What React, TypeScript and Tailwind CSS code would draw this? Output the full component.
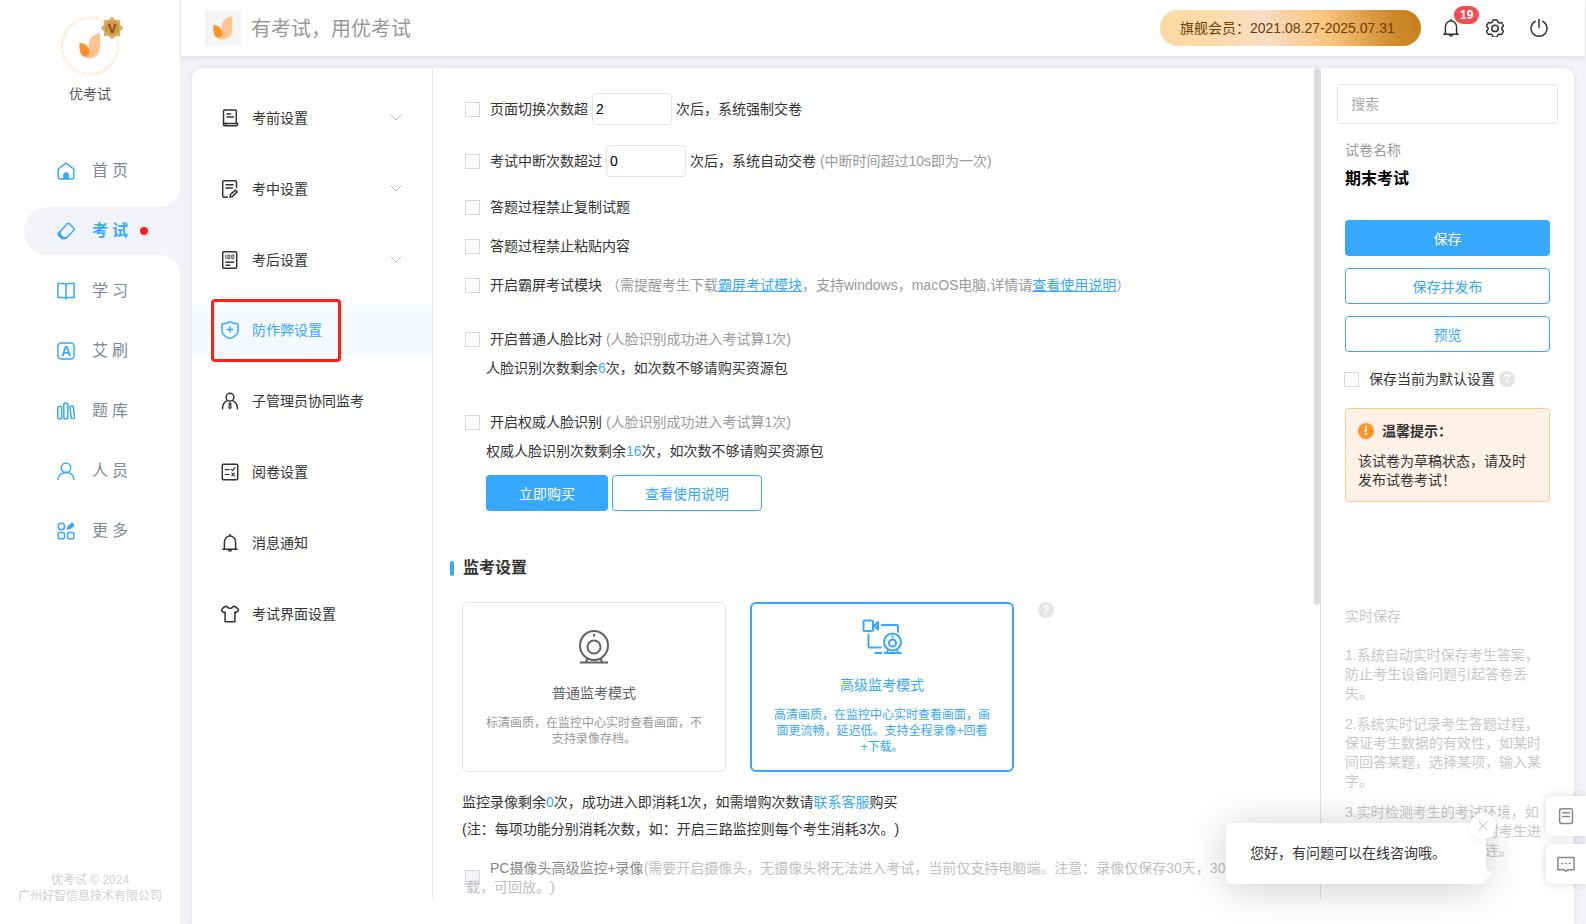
import React from "react";

type IconProps = { name: string; className?: string };

// line icons, all on an 18x18 grid
const icons: Record<string, React.ReactNode> = {
  home: (
    <>
      <path d="M1.200 7 9 1.200 16.800 7v8a2 2 0 0 1-2 2H3.200a2 2 0 0 1-2-2z"/>
      <path d="M6.200 17v-4a2.800 2.800 0 0 1 5.600 0v4z" fill="currentColor" stroke="none"/>
    </>
  ),
  exam: (
    <>
      <path d="M10.200 1.900a1.800 1.800 0 0 1 2.500 0l3.900 4a1.800 1.800 0 0 1 0 2.500l-7.700 8H4.600L1.800 13.500a1.800 1.800 0 0 1 0-2.800z"/>
      <path d="M1.600 10.600 1.800 13.500l2.800 2.900h4.300l1.100-1.100c-3 .4-6.500-1.500-6.500-6.100z" fill="currentColor" stroke="none"/>
    </>
  ),
  study: <path d="M9 3.200C8.600 2 7.800 1.500 6.600 1.500H.9v14h6.500c.9 0 1.600.4 1.600 1.500m0-13.800c.4-1.200 1.200-1.700 2.400-1.700h5.700v14h-6.500c-.9 0-1.600.4-1.600 1.500zM9 3.200v13.300"/>,
  brush: (
    <>
      <rect x=".9" y=".9" width="16.200" height="16.200" rx="3.500"/>
      <text x="9" y="13.900" textAnchor="middle" fontSize="14" fontWeight="700" fill="currentColor" stroke="none">A</text>
    </>
  ),
  bank: (
    <>
      <rect x=".8" y="4.500" width="3.800" height="12.300" rx=".8"/>
      <rect x="6.800" y="1.200" width="4" height="15.600" rx=".8"/>
      <rect x="13.500" y="4" width="3.500" height="12.500" rx=".8" transform="rotate(-7 15 10)"/>
    </>
  ),
  people: (
    <>
      <circle cx="9" cy="5.800" r="4.700"/>
      <path d="M1.100 17.300c.4-4 3.500-6.900 7.900-6.900s7.500 2.900 7.900 6.900"/>
    </>
  ),
  more: (
    <>
      <circle cx="4.300" cy="4.500" r="3.200"/>
      <rect x="1.200" y="10.600" width="6.200" height="6.200" rx="1.200"/>
      <rect x="10.600" y="10.600" width="6.200" height="6.200" rx="1.200"/>
      <path d="m9.700 7.900 1-3.800 3.600-3a1.300 1.300 0 0 1 1.700.1l1 1a1.300 1.300 0 0 1 0 1.700l-3.500 3.200-3.800.8z" fill="currentColor" stroke="none"/>
    </>
  ),
  before: (
    <>
      <path d="M2.500 14.500V2.200A1.200 1.200 0 0 1 3.700 1h10.400a1.200 1.200 0 0 1 1.200 1.200v12.300"/>
      <path d="M6 5h3.500M6 8h6.500M3.800 14.500h12.900c0 1.500-.6 2.200-1.700 2.200H3.900c-1 0-1.500-.6-1.500-1.300s.6-1.200 1.400-1.200c.9 0 1.300.6 1.300 1.300"/>
    </>
  ),
  during: (
    <>
      <path d="M15.500 7.500V2A1.200 1.200 0 0 0 14.300.800H2.900A1.200 1.200 0 0 0 1.700 2v14a1.200 1.200 0 0 0 1.200 1.200h3.600M5 4.800h7M5 8h6.500"/>
      <path d="m9 17 .5-2.600 5-4.300 1.700 1.800-4.700 4.500z"/>
    </>
  ),
  after: (
    <>
      <rect x="1.700" y=".8" width="14" height="16.400" rx="1.200"/>
      <path d="M4.900 4v3.700M7.300 4h1.500v3.700H7.300zM11.200 4h1.500v3.700h-1.500z" strokeWidth=".9"/>
      <path d="M5 11.300h7.500M5 14.200h3.500"/>
    </>
  ),
  shield: (
    <>
      <path d="M9 .7c2.300 1.500 4.900 2.100 8 2.200v6.600c0 3.900-3.800 6.600-8 8-4.200-1.400-8-4.100-8-8V2.900C4.100 2.800 6.700 2.200 9 .7z"/>
      <path d="M9 5.700v5.400M6.300 8.400h5.400" strokeWidth="1.500"/>
    </>
  ),
  admin: (
    <>
      <circle cx="9" cy="5.200" r="3.900"/>
      <path d="M1.500 16.800c0-4.200 1.900-6.800 4.600-7.900M16.500 16.800c0-4.200-1.900-6.800-4.600-7.900"/>
      <path d="m9 10.800 1 .9-.5 1.200.7 2.400L9 16.700l-1.200-1.400.7-2.400-.5-1.200z" strokeWidth="1.200"/>
    </>
  ),
  marking: (
    <>
      <rect x="1.300" y="1.300" width="15.400" height="15.400" rx="1"/>
      <path d="M4.300 6.700h4M4.300 11.500h4M10.500 6.500l1.100 1.100 2.200-2.800M10.800 10.200l2.600 2.600m0-2.600-2.600 2.600" strokeWidth="1.200"/>
    </>
  ),
  bell: (
    <>
      <path d="M9 .5v1.500M3.400 14.300V7.900C3.400 4.600 5.900 2 9 2s5.600 2.600 5.600 5.900v6.400l1.500 1H1.900z"/>
      <path d="M7.300 15.600c.2 1 .8 1.500 1.700 1.500s1.500-.5 1.700-1.500"/>
    </>
  ),
  shirt: <path d="M5.600 1.200c.8 1.600 2 2.200 3.400 2.200s2.600-.6 3.400-2.200c2.400.3 4.300 2 5.200 4.300l-2.700 2.200-1-.7v9.700H4.100V7l-1 .7L.4 5.500C1.300 3.200 3.200 1.500 5.600 1.200z"/>,
  gear: (
    <>
      <path d="M7 .9h4l.9 2.300 1.200.7 2.500-.4 1.900 3.400-1.600 1.900v1.400l1.600 1.900-1.900 3.400-2.500-.4-1.200.7-.9 2.300H7l-.9-2.300-1.200-.7-2.500.4L.5 12.100l1.600-1.900V8.800L.5 6.900l1.900-3.400 2.500.4 1.200-.7z"/>
      <circle cx="9" cy="9.400" r="3.200"/>
    </>
  ),
  power: <path d="M9 .5v8M5.200 2.300a8 8 0 1 0 7.600 0"/>,
  note: (
    <>
      <rect x="2.600" y="1.800" width="12.800" height="14.700" rx="2.200"/>
      <path d="M5.600 5.700h6.800M5.600 9.500h6.800"/>
    </>
  ),
  chat: (
    <>
      <path d="M.9 2.500h16.200v12.200h-6.300L9 16.400l-1.800-1.700H.9z"/>
      <path d="M5 8.600h.8M8.600 8.600h.8M12.200 8.600h.8"/>
    </>
  ),
};

function Icon({name, className = ""}: IconProps) {
  return (
    <svg viewBox="0 0 18 18" fill="none" stroke="currentColor" strokeWidth="1.5" strokeLinejoin="round" strokeLinecap="round" className={`size-[18px] shrink-0 ${className}`} aria-hidden="true">
      {icons[name]}
    </svg>
  );
}

function Logo({className}: { className: string }) {
  return (
    <svg viewBox="0 0 20 24" className={className} aria-hidden="true">
      <path d="M19.300.2C11.500 1.200 8.300 6.500 9 12c.8 4 .3 8-4.500 10.200 2.700 2 8.800 1.800 12-1.700 2.900-3.300 2.800-6.500 2.800-11.500z" fill="#ffc490"/>
      <path d="M.3 9c4.200.2 8 2.800 9.100 6.500.8 3.200-.9 6.300-4.400 6.500C1.300 21 0 17.500.3 9z" fill="#ff9328"/>
    </svg>
  );
}

function Check({id, disabled}: { id: string; disabled?: boolean }) {
  return <input id={id} type="checkbox" disabled={disabled} className="size-[15px] shrink-0 appearance-none border border-[#d3d6df] bg-white checked:bg-[#36a9ff] disabled:bg-[#f2f4f8]"/>;
}

function Help() {
  return <span className="flex size-4 shrink-0 items-center justify-center rounded-full bg-[#e4e4e4] text-xs font-bold leading-4 text-white">?</span>;
}

const nav = [
  {icon: "home", label: "首页"},
  {icon: "exam", label: "考试", active: true},
  {icon: "study", label: "学习"},
  {icon: "brush", label: "艾刷"},
  {icon: "bank", label: "题库"},
  {icon: "people", label: "人员"},
  {icon: "more", label: "更多"},
];

const menu = [
  {icon: "before", label: "考前设置", open: true},
  {icon: "during", label: "考中设置", open: true},
  {icon: "after", label: "考后设置", open: true},
  {icon: "shield", label: "防作弊设置", active: true},
  {icon: "admin", label: "子管理员协同监考"},
  {icon: "marking", label: "阅卷设置"},
  {icon: "bell", label: "消息通知"},
  {icon: "shirt", label: "考试界面设置"},
];

function Sidebar() {
  return (
    <aside className="flex w-[180px] shrink-0 flex-col bg-white">
      <div className="flex flex-col items-center pt-4">
        <div className="relative flex size-[60px] items-center justify-center rounded-full border-2 border-[#fbf5ea] bg-white ring-1 ring-inset ring-[#f6e6cd]">
          <Logo className="h-[26px] w-[22px]"/>
          <svg viewBox="0 0 24 24" className="absolute -top-0.5 left-[38px] size-6" aria-hidden="true">
            <path d="m12 .5 3.300 3.400 4.900-.1-.1 4.900 3.400 3.300-3.400 3.300.1 4.900-4.900-.1-3.300 3.400-3.300-3.400-4.900.1.1-4.900L.5 12l3.400-3.300-.1-4.900 4.900.1z" fill="#dcae62"/>
            <circle cx="12" cy="12" r="7.500" fill="#cf9a45"/>
            <text x="12" y="16.500" textAnchor="middle" fontSize="13" fontWeight="700" fill="#8a4b0c">V</text>
          </svg>
        </div>
        <span className="mt-2 text-sm leading-5 text-[#555]">优考试</span>
      </div>
      <nav className="mt-[43px] flex flex-col gap-3">
        {nav.map((item) => (
          <a key={item.label} href="#" className={item.active
            ? "relative ml-6 flex h-12 items-center rounded-l-full bg-[#f2f3f8] pl-[33px] text-base font-bold text-[#36a9ff]"
            : "ml-6 flex h-12 items-center pl-[33px] text-base text-[#7c8a99]"}>
            <Icon name={item.icon} className="text-[#36a9ff]"/>
            <span className="ml-[17px] tracking-[4px]">{item.label}</span>
            {item.active && (
              <>
                <span className="ml-2 size-2 rounded-full bg-[#ff1f1f]"/>
                <span className="absolute -top-5 right-0 size-5 bg-[#f2f3f8]"><span className="block size-5 rounded-br-[20px] bg-white"/></span>
                <span className="absolute -bottom-5 right-0 size-5 bg-[#f2f3f8]"><span className="block size-5 rounded-tr-[20px] bg-white"/></span>
              </>
            )}
          </a>
        ))}
      </nav>
      <p className="mt-auto pb-5 text-center text-xs leading-4 text-[#d0d0d0]">优考试 © 2024<br/>广州好智信息技术有限公司</p>
    </aside>
  );
}

function Header() {
  return (
    <header className="z-10 mx-px flex h-14 shrink-0 items-center bg-white pl-6 pr-[37px] shadow-[0_1px_6px_rgba(0,0,40,0.1)]">
      <div className="flex size-9 items-center justify-center bg-[#f5f5f5]">
        <Logo className="h-6 w-5"/>
      </div>
      <span className="ml-2.5 pt-0.5 text-xl text-[#999]">有考试，用优考试</span>
      <div className="ml-auto flex h-9 w-[261px] items-center rounded-full bg-[linear-gradient(75deg,#fbd9a0_0%,#fddcaa_20%,#f8dcc4_40%,#fbc781_62%,#cf8a2b_88%,#c67f17_100%)] pl-5 text-sm text-[#6f3b06]">
        旗舰会员：2021.08.27-2025.07.31
      </div>
      <button aria-label="消息" className="relative ml-[21px] text-[#333]">
        <Icon name="bell"/>
        <span className="absolute -top-[13px] left-3 flex h-[18px] items-center rounded-full bg-[#f24b50] px-1.5 text-xs font-bold text-white">19</span>
      </button>
      <button aria-label="设置" className="ml-[26px] text-[#333]"><Icon name="gear"/></button>
      <button aria-label="退出" className="ml-[26px] text-[#333]"><Icon name="power"/></button>
    </header>
  );
}

function Menu() {
  return (
    <nav className="flex w-[241px] shrink-0 flex-col gap-[21px] border-r border-[#e4e4e4] pt-6">
      {menu.map((item) => (
        <a key={item.label} href="#" className={item.active
          ? "relative flex h-[50px] items-center bg-[#f5faff] pl-[29px] text-[#36a9ff]"
          : item.open
            ? "flex h-[50px] items-center pl-[29px] pt-0.5 text-[#333]"
            : "flex h-[50px] items-center pl-[29px] text-[#333]"}>
          <Icon name={item.icon}/>
          <span className="ml-[13px]">{item.label}</span>
          {item.open && (
            <svg viewBox="0 0 12 7" className="mb-0.5 ml-auto mr-[30px] h-[7px] w-3" fill="none" stroke="#bbb" aria-hidden="true"><path d="m.5.5 5.500 5.500L11.500.5"/></svg>
          )}
          {item.active && <span className="absolute -top-1.5 left-[19px] h-[63px] w-[130px] rounded-sm border-[3px] border-[#ff2015]"/>}
        </a>
      ))}
    </nav>
  );
}

function Content() {
  return (
    <main className="min-w-0 flex-1 overflow-hidden pl-[17px] pr-6 text-[#333]">
      <div className="flex flex-col pl-[15px] pt-[25px] leading-[22px]">
        <div className="flex h-8 items-center">
          <Check id="switch"/>
          <label htmlFor="switch" className="ml-2.5">页面切换次数超</label>
          <input aria-label="页面切换次数" defaultValue="2" className="mx-1 h-8 w-20 rounded border border-[#e4e4e4] px-[3px] text-black"/>
          <span>次后，系统强制交卷</span>
        </div>
        <div className="mt-5 flex h-8 items-center">
          <Check id="break"/>
          <label htmlFor="break" className="ml-2.5">考试中断次数超过</label>
          <input aria-label="考试中断次数" defaultValue="0" className="mx-1 h-8 w-20 rounded border border-[#e4e4e4] px-[3px] text-black"/>
          <span>次后，系统自动交卷 <span className="text-[#999]">(中断时间超过10s即为一次)</span></span>
        </div>
        <div className="mt-[19px] flex items-center">
          <Check id="copy"/>
          <label htmlFor="copy" className="ml-2.5">答题过程禁止复制试题</label>
        </div>
        <div className="mt-[17px] flex items-center">
          <Check id="paste"/>
          <label htmlFor="paste" className="ml-2.5">答题过程禁止粘贴内容</label>
        </div>
        <div className="mt-[17px] flex items-center">
          <Check id="lock"/>
          <label htmlFor="lock" className="ml-2.5">开启霸屏考试模块</label>
          <span className="ml-1 text-[#999]">（需提醒考生下载<a href="#" className="text-[#36a9ff] underline">霸屏考试模块</a>，支持windows，macOS电脑,详情请<a href="#" className="text-[#36a9ff] underline">查看使用说明</a>）</span>
        </div>
        <div className="mt-8 flex items-center">
          <Check id="face"/>
          <label htmlFor="face" className="ml-2.5">开启普通人脸比对 <span className="text-[#999]">(人脸识别成功进入考试算1次)</span></label>
        </div>
        <p className="ml-[21px] mt-[7px]">人脸识别次数剩余<span className="text-[#36a9ff]">6</span>次，如次数不够请购买资源包</p>
        <div className="mt-8 flex items-center">
          <Check id="auth"/>
          <label htmlFor="auth" className="ml-2.5">开启权威人脸识别 <span className="text-[#999]">(人脸识别成功进入考试算1次)</span></label>
        </div>
        <p className="ml-[21px] mt-[7px]">权威人脸识别次数剩余<span className="text-[#36a9ff]">16</span>次，如次数不够请购买资源包</p>
        <div className="ml-[21px] mt-[13px] flex gap-1">
          <button className="h-9 rounded bg-[#36a9ff] px-[33px] pt-0.5 text-white">立即购买</button>
          <button className="h-9 rounded border border-[#36a9ff] px-8 pt-0.5 text-[#36a9ff]">查看使用说明</button>
        </div>
      </div>

      <h2 className="mt-[46px] flex items-center text-base font-bold leading-[22px]">
        <span className="mr-[9px] h-[15px] w-1 rounded-sm bg-[#36a9ff]"/>监考设置
      </h2>
      <div className="mt-[23px] flex items-start pl-3">
        <button className="flex h-[170px] w-[264px] flex-col items-center rounded-md border border-[#e4e4e4] px-[23px] pt-[27px]">
          <svg viewBox="0 0 32 34" className="h-[34px] w-8" fill="none" stroke="#606266" strokeWidth="2" aria-hidden="true">
            <ellipse cx="16" cy="15.500" rx="14" ry="14.500"/>
            <circle cx="16" cy="17" r="6.500"/>
            <path d="M16 4v2.500M9.500 28.500l-1.500 3.500M22.500 28.500l1.500 3.500M2 32.500h28"/>
          </svg>
          <span className="mt-[18px] leading-[22px] text-[#606266]">普通监考模式</span>
          <span className="mt-[11px] text-xs leading-4 text-[#999]">标清画质，在监控中心实时查看画面，不支持录像存档。</span>
        </button>
        <button className="ml-6 flex h-[170px] w-[264px] flex-col items-center rounded-md border-2 border-[#36a9ff] px-[22px] pt-[15px] text-[#36a9ff]">
          <svg viewBox="0 0 40 36" className="h-9 w-10" fill="none" stroke="currentColor" strokeWidth="2" strokeLinejoin="round" aria-hidden="true">
            <rect x="1.500" y="1.500" width="9.500" height="10.500" rx="1.500"/>
            <path d="m16 3-4 3.800 4 3.700z" fill="currentColor" fillOpacity=".4"/>
            <path d="M19 6h15.500A1.500 1.500 0 0 1 36 7.500v6M6.500 15v11.500A1.500 1.500 0 0 0 8 28.500h11.500M12.500 34H20M22 34h17.500M26 31l-1 2.500M35 31l1 2.500"/>
            <circle cx="30.500" cy="23" r="8.500"/>
            <circle cx="30.500" cy="24" r="3.500"/>
            <path d="M30.500 16.500v2"/>
          </svg>
          <span className="mt-[19px] leading-[22px]">高级监考模式</span>
          <span className="mt-[11px] text-xs leading-4">高清画质，在监控中心实时查看画面，画面更流畅，延迟低。支持全程录像+回看+下载。</span>
        </button>
        <span className="ml-6"><Help/></span>
      </div>
      <p className="mt-[19px] pl-3 leading-[22px]">监控录像剩余<span className="text-[#36a9ff]">0</span>次，成功进入即消耗1次，如需增购次数请<a href="#" className="text-[#36a9ff]">联系客服</a>购买</p>
      <p className="mt-[5px] pl-3 leading-[22px]">(注：每项功能分别消耗次数，如：开启三路监控则每个考生消耗3次。)</p>
      <div className="relative mt-[19px] pl-4 leading-[19px]">
        <span className="absolute left-[15px] top-[11px] flex"><Check id="pc" disabled/></span>
        <label htmlFor="pc" className="relative block indent-6 text-[#888]">PC摄像头高级监控+录像<span className="text-[#c0c0c0]">(需要开启摄像头，无摄像头将无法进入考试，当前仅支持电脑端。注意：录像仅保存30天，30天内可下载，可回放。)</span></label>
      </div>
    </main>
  );
}

function Panel() {
  return (
    <aside className="w-[254px] shrink-0 overflow-hidden border-l border-[#e0e0e0] px-4 pt-4">
      <input type="search" aria-label="搜索" placeholder="搜索" className="h-10 w-full rounded border border-[#e2e2e2] px-[13px] placeholder:text-[#aaa]"/>
      <div className="px-2">
        <p className="mt-[15px] leading-[22px] text-[#999]">试卷名称</p>
        <h1 className="mt-[7px] text-base font-bold leading-[22px] text-black">期末考试</h1>
        <div className="mt-[30px] flex flex-col gap-3">
          <button className="h-9 rounded bg-[#36a9ff] pt-0.5 text-white">保存</button>
          <button className="h-9 rounded border border-[#36a9ff] pt-0.5 text-[#36a9ff]">保存并发布</button>
          <button className="h-9 rounded border border-[#36a9ff] pt-0.5 text-[#36a9ff]">预览</button>
        </div>
        <div className="-ml-px mt-4 flex items-center leading-[22px] text-[#333]">
          <Check id="default"/>
          <label htmlFor="default" className="ml-2.5 mr-1 whitespace-nowrap">保存当前为默认设置</label>
          <Help/>
        </div>
        <div className="mt-[18px] rounded border border-[#fbc98b] bg-[#fff1e6] px-3 pb-[11px] pt-[11px] text-[#333]">
          <div className="flex items-center font-bold leading-[22px]">
            <span className="mr-2 flex size-4 items-center justify-center rounded-full bg-[#ff9429] text-xs text-white">!</span>温馨提示：
          </div>
          <p className="mt-2.5 leading-[19px]">该试卷为草稿状态，请及时发布试卷考试！</p>
        </div>
        <div className="mt-[105px] leading-[19px] text-[#c8c8c8]">
          <p>实时保存</p>
          <p className="mt-5">1.系统自动实时保存考生答案，防止考生设备问题引起答卷丢失。</p>
          <p className="mt-3">2.系统实时记录考生答题过程，保证考生数据的有效性，如某时间回答某题，选择某项，输入某字。</p>
          <p className="mt-3">3.实时检测考生的考试环境，如果出现断网等异常情况时考生进行提醒并且支持断网重连。</p>
        </div>
      </div>
    </aside>
  );
}

export default function App() {
  return (
    <div className="relative flex h-screen overflow-hidden bg-[#f2f3f8] font-['Liberation_Sans','Noto_Sans_CJK_SC',sans-serif] text-sm [text-spacing-trim:space-all]">
      <Sidebar/>
      <div className="flex min-w-0 flex-1 flex-col">
        <Header/>
        <div className="mx-3 mt-3 flex min-h-0 flex-1 rounded-t-[10px] bg-white pb-[25px] shadow-[0_0_6px_rgba(0,0,40,0.08)]">
          <Menu/>
          <Content/>
          <div className="w-1.5 shrink-0"><div className="h-[calc(65%-3px)] rounded-full bg-[#dcdcdc]"/></div>
          <Panel/>
        </div>
      </div>

      {/* online support */}
      <div className="absolute bottom-10 right-[100px] flex h-[61px] w-[260px] items-center rounded-md bg-white pb-0.5 pl-6 text-[#333] shadow-[0_4px_40px_rgba(0,0,0,0.2)]">
        您好，有问题可以在线咨询哦。
        <span className="absolute -right-1 bottom-1.5 size-2 rotate-45 bg-white"/>
        <button aria-label="关闭" className="absolute -right-2.5 -top-2.5 flex size-[26px] items-center justify-center rounded-full bg-white shadow-[0_0_8px_rgba(0,0,0,0.08)]">
          <svg viewBox="0 0 10 10" className="size-2.5" stroke="#bbb" aria-hidden="true"><path d="m.7.7 8.600 8.600M9.300.7.700 9.300"/></svg>
        </button>
      </div>
      <div className="absolute bottom-10 right-0 flex flex-col gap-2 text-[#888]">
        <button aria-label="文档" className="flex size-10 items-center justify-center rounded-l-md bg-white shadow-[0_0_8px_rgba(0,0,0,0.15)]"><Icon name="note"/></button>
        <button aria-label="客服" className="flex size-10 items-center justify-center rounded-l-md bg-white shadow-[0_0_8px_rgba(0,0,0,0.15)]"><Icon name="chat"/></button>
      </div>
    </div>
  );
}
